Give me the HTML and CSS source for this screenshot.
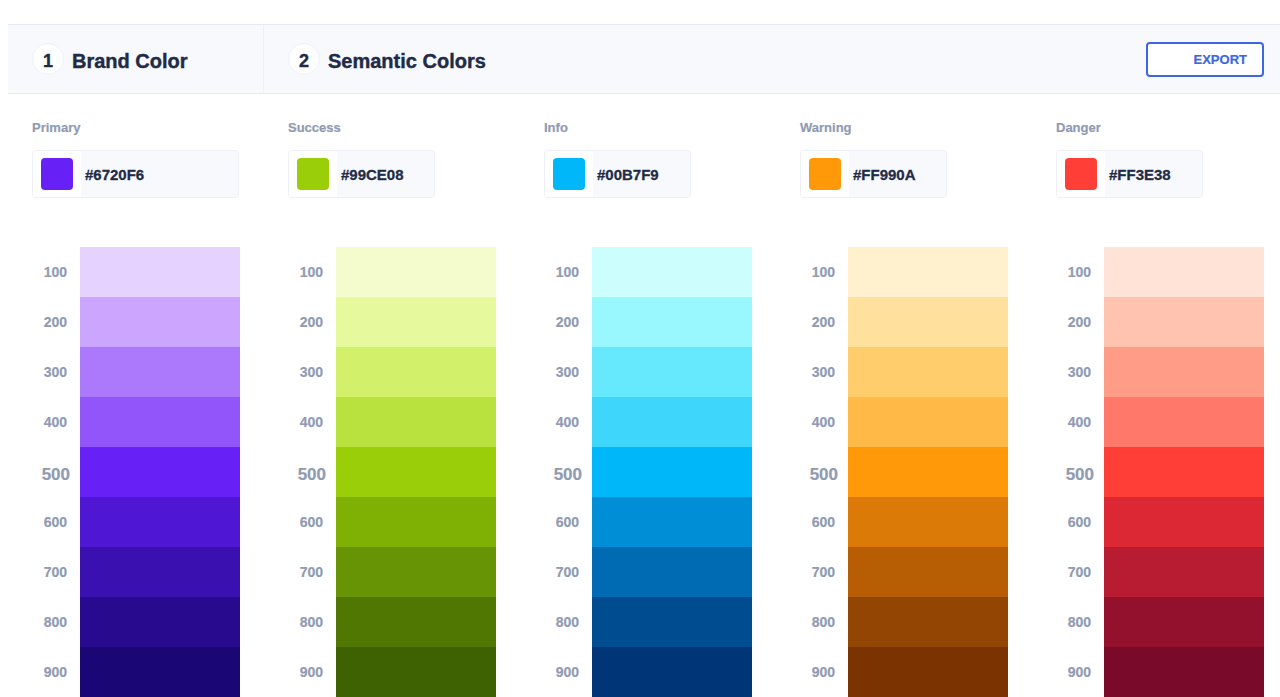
FILE: index.html
```html
<!DOCTYPE html>
<html lang="en">
<head>
<meta charset="utf-8">
<title>Theme Colors</title>
<link rel="stylesheet" href="styles.css">
</head>
<body>
<div class="page">
  <header class="steps">
    <div class="step step-brand">
      <span class="step-num">1</span>
      <span class="step-title">Brand Color</span>
    </div>
    <div class="step step-semantic">
      <span class="step-num">2</span>
      <span class="step-title">Semantic Colors</span>
      <button class="export-btn">EXPORT</button>
    </div>
  </header>

  <main class="palettes">
    <section class="palette">
      <div class="palette-name">Primary</div>
      <div class="color-input color-input-wide"><span class="chip-well"><span class="chip" style="background:#6720F6"></span></span><span class="hex">#6720F6</span></div>
      <div class="shades">
        <div class="shade"><span class="shade-label">100</span><span class="shade-fill" style="background:#E6D2FE"></span></div>
        <div class="shade"><span class="shade-label">200</span><span class="shade-fill" style="background:#CBA5FE"></span></div>
        <div class="shade"><span class="shade-label">300</span><span class="shade-fill" style="background:#AC78FC"></span></div>
        <div class="shade"><span class="shade-label">400</span><span class="shade-fill" style="background:#9155F9"></span></div>
        <div class="shade shade-base"><span class="shade-label">500</span><span class="shade-fill" style="background:#6720F6"></span></div>
        <div class="shade"><span class="shade-label">600</span><span class="shade-fill" style="background:#4F17D3"></span></div>
        <div class="shade"><span class="shade-label">700</span><span class="shade-fill" style="background:#3A10B1"></span></div>
        <div class="shade"><span class="shade-label">800</span><span class="shade-fill" style="background:#280A8E"></span></div>
        <div class="shade"><span class="shade-label">900</span><span class="shade-fill" style="background:#1B0676"></span></div>
      </div>
    </section>

    <section class="palette">
      <div class="palette-name">Success</div>
      <div class="color-input"><span class="chip-well"><span class="chip" style="background:#99CE08"></span></span><span class="hex">#99CE08</span></div>
      <div class="shades">
        <div class="shade"><span class="shade-label">100</span><span class="shade-fill" style="background:#F4FCCE"></span></div>
        <div class="shade"><span class="shade-label">200</span><span class="shade-fill" style="background:#E7F99D"></span></div>
        <div class="shade"><span class="shade-label">300</span><span class="shade-fill" style="background:#D3F06B"></span></div>
        <div class="shade"><span class="shade-label">400</span><span class="shade-fill" style="background:#BAE23F"></span></div>
        <div class="shade shade-base"><span class="shade-label">500</span><span class="shade-fill" style="background:#99CE08"></span></div>
        <div class="shade"><span class="shade-label">600</span><span class="shade-fill" style="background:#7FB105"></span></div>
        <div class="shade"><span class="shade-label">700</span><span class="shade-fill" style="background:#669404"></span></div>
        <div class="shade"><span class="shade-label">800</span><span class="shade-fill" style="background:#4F7702"></span></div>
        <div class="shade"><span class="shade-label">900</span><span class="shade-fill" style="background:#3E6201"></span></div>
      </div>
    </section>

    <section class="palette">
      <div class="palette-name">Info</div>
      <div class="color-input"><span class="chip-well"><span class="chip" style="background:#00B7F9"></span></span><span class="hex">#00B7F9</span></div>
      <div class="shades">
        <div class="shade"><span class="shade-label">100</span><span class="shade-fill" style="background:#CCFEFE"></span></div>
        <div class="shade"><span class="shade-label">200</span><span class="shade-fill" style="background:#99F8FE"></span></div>
        <div class="shade"><span class="shade-label">300</span><span class="shade-fill" style="background:#66E9FC"></span></div>
        <div class="shade"><span class="shade-label">400</span><span class="shade-fill" style="background:#3FD6FB"></span></div>
        <div class="shade shade-base"><span class="shade-label">500</span><span class="shade-fill" style="background:#00B7F9"></span></div>
        <div class="shade"><span class="shade-label">600</span><span class="shade-fill" style="background:#008ED6"></span></div>
        <div class="shade"><span class="shade-label">700</span><span class="shade-fill" style="background:#006AB3"></span></div>
        <div class="shade"><span class="shade-label">800</span><span class="shade-fill" style="background:#004C90"></span></div>
        <div class="shade"><span class="shade-label">900</span><span class="shade-fill" style="background:#003677"></span></div>
      </div>
    </section>

    <section class="palette">
      <div class="palette-name">Warning</div>
      <div class="color-input"><span class="chip-well"><span class="chip" style="background:#FF990A"></span></span><span class="hex">#FF990A</span></div>
      <div class="shades">
        <div class="shade"><span class="shade-label">100</span><span class="shade-fill" style="background:#FFF1CE"></span></div>
        <div class="shade"><span class="shade-label">200</span><span class="shade-fill" style="background:#FFE19D"></span></div>
        <div class="shade"><span class="shade-label">300</span><span class="shade-fill" style="background:#FFCD6C"></span></div>
        <div class="shade"><span class="shade-label">400</span><span class="shade-fill" style="background:#FFB947"></span></div>
        <div class="shade shade-base"><span class="shade-label">500</span><span class="shade-fill" style="background:#FF990A"></span></div>
        <div class="shade"><span class="shade-label">600</span><span class="shade-fill" style="background:#DB7A07"></span></div>
        <div class="shade"><span class="shade-label">700</span><span class="shade-fill" style="background:#B75E05"></span></div>
        <div class="shade"><span class="shade-label">800</span><span class="shade-fill" style="background:#934503"></span></div>
        <div class="shade"><span class="shade-label">900</span><span class="shade-fill" style="background:#7A3301"></span></div>
      </div>
    </section>

    <section class="palette">
      <div class="palette-name">Danger</div>
      <div class="color-input"><span class="chip-well"><span class="chip" style="background:#FF3E38"></span></span><span class="hex">#FF3E38</span></div>
      <div class="shades">
        <div class="shade"><span class="shade-label">100</span><span class="shade-fill" style="background:#FFE3D7"></span></div>
        <div class="shade"><span class="shade-label">200</span><span class="shade-fill" style="background:#FFC3AF"></span></div>
        <div class="shade"><span class="shade-label">300</span><span class="shade-fill" style="background:#FF9C87"></span></div>
        <div class="shade"><span class="shade-label">400</span><span class="shade-fill" style="background:#FF7869"></span></div>
        <div class="shade shade-base"><span class="shade-label">500</span><span class="shade-fill" style="background:#FF3E38"></span></div>
        <div class="shade"><span class="shade-label">600</span><span class="shade-fill" style="background:#DB2834"></span></div>
        <div class="shade"><span class="shade-label">700</span><span class="shade-fill" style="background:#B71C32"></span></div>
        <div class="shade"><span class="shade-label">800</span><span class="shade-fill" style="background:#93112D"></span></div>
        <div class="shade"><span class="shade-label">900</span><span class="shade-fill" style="background:#7A0A2A"></span></div>
      </div>
    </section>
  </main>
</div>
</body>
</html>
```

FILE: styles.css
```css
* {
  box-sizing: border-box;
}

html, body {
  margin: 0;
  padding: 0;
  background: #ffffff;
}

body {
  font-family: "Liberation Sans", Arial, sans-serif;
  color: #222b45;
}

.page {
  padding: 24px 0 0 8px;
}

/* Step header */
.steps {
  display: flex;
  height: 70px;
  background: #f7f9fc;
  border-top: 1px solid #e4e9f2;
  border-bottom: 1px solid #e4e9f2;
}

.step {
  display: flex;
  align-items: center;
  padding: 0 24px;
  height: 100%;
}

.step-brand {
  width: 256px;
  border-right: 1px solid #edf1f7;
  flex: none;
}

.step-semantic {
  flex: 1;
  padding-right: 16px;
}

.step-num {
  width: 32px;
  height: 32px;
  border-radius: 50%;
  background: #ffffff;
  border: 1px solid #edf1f7;
  display: flex;
  align-items: center;
  justify-content: center;
  padding-top: 4px;
  font-size: 18px;
  font-weight: 700;
  color: #222b45;
  -webkit-text-stroke: 0.4px #222b45;
  margin-right: 8px;
  flex: none;
}

.step-title {
  padding-top: 5px;
  font-size: 20px;
  font-weight: 700;
  color: #222b45;
  -webkit-text-stroke: 0.4px #222b45;
}

.export-btn {
  margin-left: auto;
  width: 118px;
  height: 35px;
  border: 2px solid #3d66e3;
  border-radius: 4px;
  background: #ffffff;
  color: #3d66e3;
  font-family: "Liberation Sans", Arial, sans-serif;
  font-size: 13px;
  font-weight: 700;
  -webkit-text-stroke: 0.2px #3d66e3;
  text-align: right;
  padding: 1px 15px 0 0;
  cursor: pointer;
}

/* Palettes */
.palettes {
  display: flex;
}

.palette {
  width: 256px;
  flex: none;
  padding: 0 24px;
}

.palette-name {
  margin-top: 26px;
  height: 15px;
  font-size: 13px;
  font-weight: 700;
  color: #8f9bb3;
  -webkit-text-stroke: 0.2px #8f9bb3;
}

.color-input {
  margin-top: 15px;
  width: 147px;
  height: 48px;
  border: 1px solid #edf1f7;
  border-radius: 4px;
  background: #f7f9fc;
  display: flex;
  align-items: center;
  overflow: hidden;
}

.color-input-wide {
  width: 207px;
}

/* white well that holds the colour chip */
.chip-well {
  width: 48px;
  height: 100%;
  background: #ffffff;
  display: flex;
  align-items: center;
  justify-content: center;
  flex: none;
}

.chip {
  width: 32px;
  height: 32px;
  border-radius: 4px;
}

.hex {
  padding-left: 4px;
  font-size: 15px;
  font-weight: 700;
  color: #222b45;
  -webkit-text-stroke: 0.3px #222b45;
}

.shades {
  margin-top: 49px;
}

.shade {
  display: flex;
  align-items: center;
  height: 50px;
}

.shade-label {
  width: 48px;
  padding-right: 13px;
  text-align: right;
  font-size: 14px;
  font-weight: 700;
  color: #8f9bb3;
  -webkit-text-stroke: 0.2px #8f9bb3;
}

.shade-base .shade-label {
  font-size: 17px;
  padding-right: 10px;
  padding-top: 5px;
}

.shade-fill {
  width: 160px;
  height: 100%;
}
```
